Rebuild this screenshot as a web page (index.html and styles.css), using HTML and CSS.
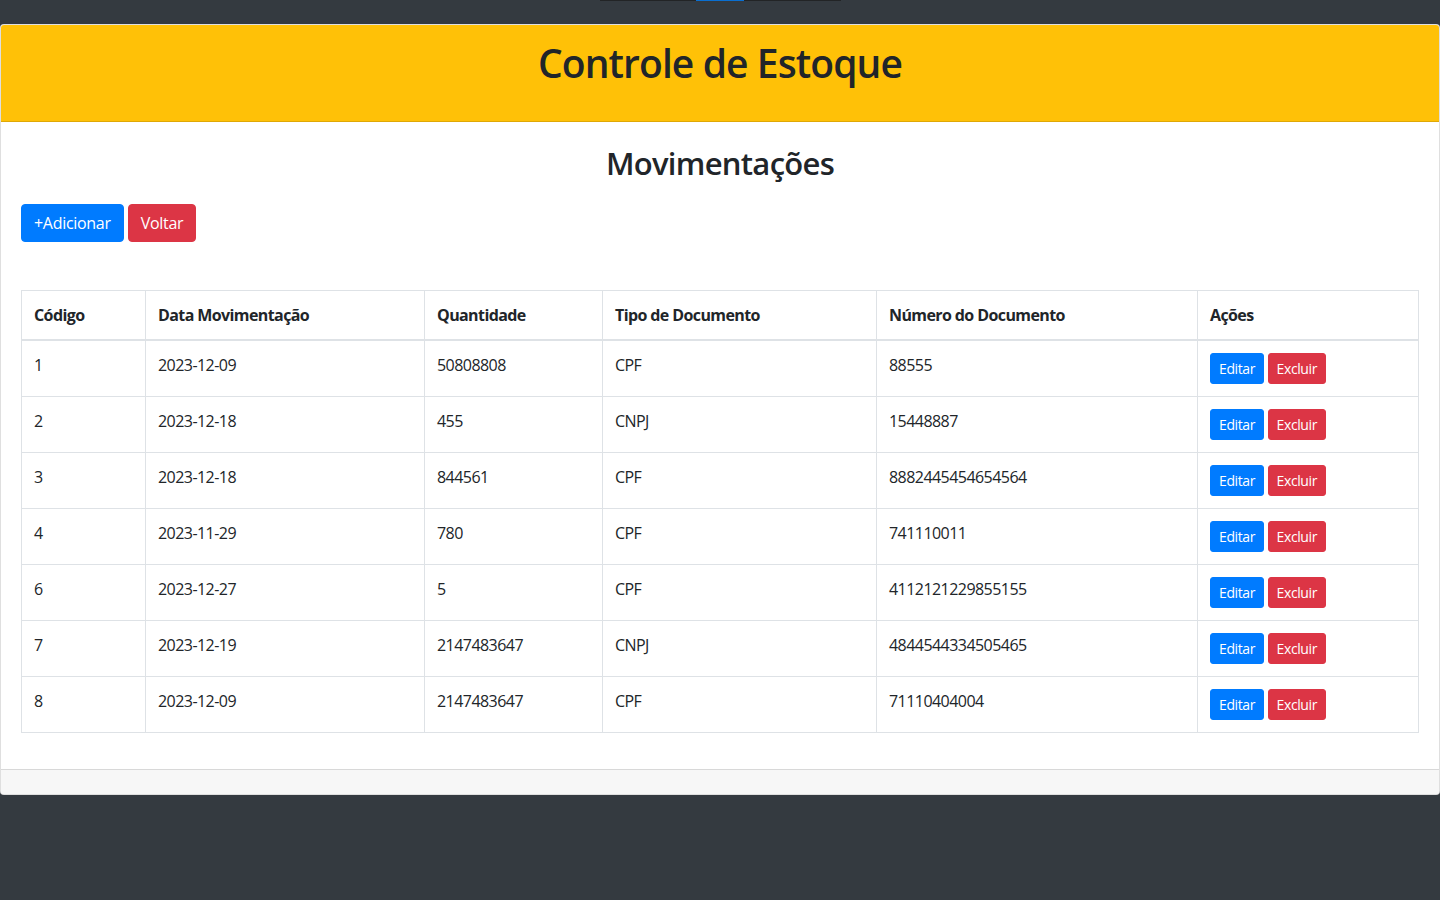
FILE: index.html
```html
<!DOCTYPE html>
<html lang="pt-BR">
<head>
<meta charset="utf-8">
<title>Controle de Estoque</title>
<link rel="stylesheet" href="styles.css">
</head>
<body>
<div class="topbar"><div class="topbar-seg"></div></div>
<div class="card">
  <div class="card-header">
    <h1>Controle de Estoque</h1>
  </div>
  <div class="card-body">
    <h2>Movimentações</h2>
    <div class="actions">
      <button class="btn btn-primary">+Adicionar</button>
      <button class="btn btn-danger">Voltar</button>
    </div>
    <table class="table">
      <thead>
        <tr>
          <th class="c1">Código</th>
          <th class="c2">Data Movimentação</th>
          <th class="c3">Quantidade</th>
          <th class="c4">Tipo de Documento</th>
          <th class="c5">Número do Documento</th>
          <th class="c6">Ações</th>
        </tr>
      </thead>
      <tbody>
        <tr><td>1</td><td>2023-12-09</td><td>50808808</td><td>CPF</td><td>88555</td><td><button class="btn btn-sm btn-primary">Editar</button> <button class="btn btn-sm btn-danger">Excluir</button></td></tr>
        <tr><td>2</td><td>2023-12-18</td><td>455</td><td>CNPJ</td><td>15448887</td><td><button class="btn btn-sm btn-primary">Editar</button> <button class="btn btn-sm btn-danger">Excluir</button></td></tr>
        <tr><td>3</td><td>2023-12-18</td><td>844561</td><td>CPF</td><td>8882445454654564</td><td><button class="btn btn-sm btn-primary">Editar</button> <button class="btn btn-sm btn-danger">Excluir</button></td></tr>
        <tr><td>4</td><td>2023-11-29</td><td>780</td><td>CPF</td><td>741110011</td><td><button class="btn btn-sm btn-primary">Editar</button> <button class="btn btn-sm btn-danger">Excluir</button></td></tr>
        <tr><td>6</td><td>2023-12-27</td><td>5</td><td>CPF</td><td>4112121229855155</td><td><button class="btn btn-sm btn-primary">Editar</button> <button class="btn btn-sm btn-danger">Excluir</button></td></tr>
        <tr><td>7</td><td>2023-12-19</td><td>2147483647</td><td>CNPJ</td><td>4844544334505465</td><td><button class="btn btn-sm btn-primary">Editar</button> <button class="btn btn-sm btn-danger">Excluir</button></td></tr>
        <tr><td>8</td><td>2023-12-09</td><td>2147483647</td><td>CPF</td><td>71110404004</td><td><button class="btn btn-sm btn-primary">Editar</button> <button class="btn btn-sm btn-danger">Excluir</button></td></tr>
      </tbody>
    </table>
  </div>
  <div class="card-footer"></div>
</div>
</body>
</html>
```

FILE: styles.css
```css
* { box-sizing: border-box; }
html, body { margin: 0; padding: 0; }
body {
  background: #343a40;
  font-family: "Segoe UI", "Open Sans", "Noto Sans", sans-serif;
  font-size: 16px;
  line-height: 1.5;
  color: #212529;
  min-height: 900px;
}
.topbar {
  width: 241px;
  height: 1px;
  margin: 0 auto 23px;
  padding-left: 96px;
  background: #222426;
}
.topbar-seg {
  width: 48px;
  height: 1px;
  background: #0a6fd1;
}
.card {
  background: #fff;
  border: 1px solid rgba(0,0,0,.125);
  border-radius: 4px;
  overflow: hidden;
}
.card-header {
  background: #ffc107;
  border-bottom: 1px solid rgba(0,0,0,.125);
  height: 97px;
  padding: 12px 20px;
  text-align: center;
}
h1 {
  margin: 0;
  font-size: 39px;
  font-weight: 600;
  line-height: 48px;
  letter-spacing: -0.9px;
  padding-top: 2px;
}
.card-body {
  padding: 20px 20px 20px;
}
h2 {
  margin: 0;
  padding-top: 2px;
  font-size: 31px;
  font-weight: 600;
  line-height: 38px;
  letter-spacing: -0.7px;
  text-align: center;
}
.actions {
  display: flex;
  gap: 4px;
  padding-top: 22px;
  margin-bottom: 48px;
}
.btn {
  font-family: inherit;
  font-size: 16px;
  line-height: 24px;
  padding: 6px 12px;
  border: 1px solid transparent;
  border-radius: 4px;
  color: #fff;
  cursor: pointer;
  letter-spacing: -0.3px;
}
.btn-primary { background: #007bff; border-color: #007bff; }
.btn-danger { background: #dc3545; border-color: #dc3545; }
.btn-sm {
  font-size: 14px;
  line-height: 21px;
  padding: 4px 8px;
  border-radius: 3px;
  letter-spacing: -0.4px;
}
.table {
  width: 100%;
  border-collapse: collapse;
  margin-bottom: 16px;
}
.table th, .table td {
  border: 1px solid #dee2e6;
  padding: 12px;
  text-align: left;
  vertical-align: top;
  letter-spacing: -0.55px;
}
.table th {
  font-weight: 700;
  border-bottom-width: 2px;
  letter-spacing: -0.6px;
}
.c1 { width: 124px; }
.c2 { width: 279px; }
.c3 { width: 178px; }
.c4 { width: 274px; }
.c5 { width: 321px; }
.c6 { width: 221px; }
.card-footer {
  background: #f7f7f7;
  border-top: 1px solid rgba(0,0,0,.125);
  height: 25px;
}
```
